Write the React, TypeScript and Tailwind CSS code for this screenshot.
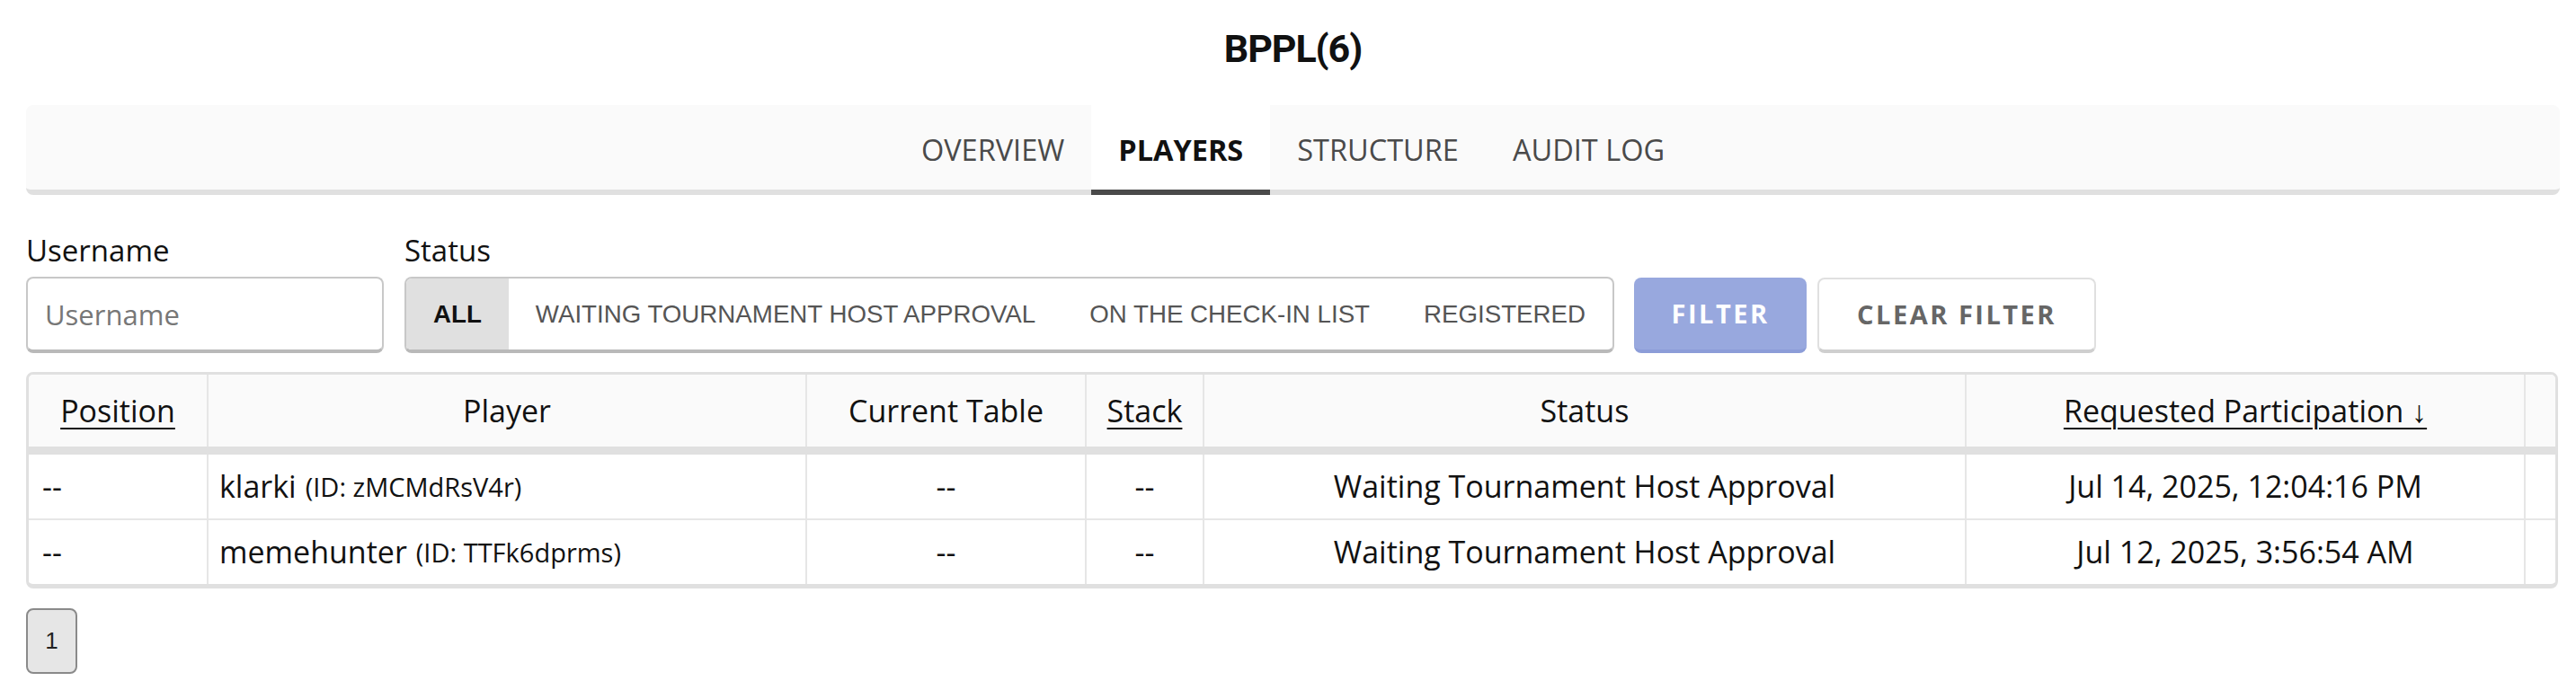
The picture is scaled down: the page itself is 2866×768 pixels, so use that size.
import React from 'react'

const body = { fontFamily: '"Open Sans", "Noto Sans", sans-serif' }
const arial = { fontFamily: '"Liberation Sans", Arial, sans-serif' }

const tabs = ['OVERVIEW', 'PLAYERS', 'STRUCTURE', 'AUDIT LOG']
const statuses = ['ALL', 'WAITING TOURNAMENT HOST APPROVAL', 'ON THE CHECK-IN LIST', 'REGISTERED']

const players = [
  { name: 'klarki', id: 'zMCMdRsV4r', date: 'Jul 14, 2025, 12:04:16 PM' },
  { name: 'memehunter', id: 'TTFk6dprms', date: 'Jul 12, 2025, 3:56:54 AM' },
]

const cols = 'grid grid-cols-[198px_666px_311px_131px_848px_622px_35px]'

function HeaderCell({ children, sort, first }: { children?: React.ReactNode; sort?: boolean; first?: boolean }) {
  return (
    <div className={`flex items-center justify-center ${first ? '' : 'border-l-2 border-[#e6e6e6]'}`}>
      <span className={sort ? 'underline decoration-2 underline-offset-[6px]' : ''}>{children}</span>
    </div>
  )
}

export default function App() {
  return (
    <div className="min-h-screen bg-white pl-[29px] pr-[18px] text-[#111]" style={body}>
      <h1
        className="pt-[30px] h-[117px] text-center text-[43px] leading-[48px] font-bold tracking-tight"
        style={{ fontFamily: 'Roboto, "Liberation Sans", sans-serif' }}
      >
        BPPL(6)
      </h1>

      <div className="h-[100px] flex justify-center bg-[#fafafa] rounded-[8px] border-b-[6px] border-[#e0e0e0]">
        {tabs.map(t => {
          const active = t === 'PLAYERS'
          return (
            <div
              key={t}
              className={`px-[30px] flex items-center pt-[6px] text-[32.5px] ${
                active ? 'bg-white font-bold text-[#111] border-b-[6px] border-[#4a4a4a] -mb-[6px]' : 'text-[#4a4a4a]'
              }`}
            >
              {t}
            </div>
          )
        })}
      </div>

      <div className="mt-[40px] flex items-end">
        <div className="flex flex-col">
          <label className="text-[33px] leading-[44px] mb-[7px]">Username</label>
          <input
            placeholder="Username"
            className="w-[398px] h-[85px] rounded-[8px] border-2 border-b-4 border-[#c8c8c8] border-b-[#b9b9b9] pl-[19px] text-[31px] placeholder:text-[#777] outline-none"
            style={body}
          />
        </div>

        <div className="flex flex-col ml-[23px]">
          <label className="text-[33px] leading-[44px] mb-[7px]">Status</label>
          <div
            className="flex h-[85px] rounded-[8px] border-2 border-b-4 border-[#c8c8c8] border-b-[#b9b9b9] overflow-hidden text-[27.7px]"
            style={arial}
          >
            {statuses.map(s => {
              const active = s === 'ALL'
              return (
                <div
                  key={s}
                  className={`px-[30px] flex items-center ${
                    active ? 'bg-[#e0e0e0] font-bold text-[#111]' : 'text-[#555]'
                  }`}
                >
                  {s}
                </div>
              )
            })}
          </div>
        </div>

        <button className="ml-[22px] w-[192px] h-[84px] rounded-[8px] bg-[#98a8de] border-b-4 border-[#8c9dd8] text-white font-bold text-[29px] tracking-[2.5px]">
          FILTER
        </button>
        <button className="ml-[12px] w-[310px] h-[84px] rounded-[8px] bg-white border-2 border-b-4 border-[#e0e0e0] border-b-[#cfcfcf] text-[#666] font-bold text-[29px] tracking-[2.5px]">
          CLEAR FILTER
        </button>
      </div>

      <div className="mt-[21px] w-[2817px] rounded-[8px] border-[3px] border-b-[5px] border-[#e0e0e0] overflow-hidden text-[34px]">
        <div className={`${cols} h-[80px] bg-[#fafafa] border-b-[9px] border-[#e0e0e0] box-content`}>
          <HeaderCell sort first>Position</HeaderCell>
          <HeaderCell>Player</HeaderCell>
          <HeaderCell>Current Table</HeaderCell>
          <HeaderCell sort>Stack</HeaderCell>
          <HeaderCell>Status</HeaderCell>
          <HeaderCell sort>Requested Participation ↓</HeaderCell>
          <HeaderCell />
        </div>
        {players.map((p, i) => (
          <div
            key={p.id}
            className={`${cols} h-[71px] box-content ${i === 0 ? 'border-b-2 border-[#e6e6e6]' : ''}`}
          >
            <div className="flex items-center pl-[15px]">--</div>
            <div className="flex items-center pl-[12px] border-l-2 border-[#e6e6e6]">
              {p.name}
              <span className="ml-[10px] text-[29px]">(ID: {p.id})</span>
            </div>
            <div className="flex items-center justify-center border-l-2 border-[#e6e6e6]">--</div>
            <div className="flex items-center justify-center border-l-2 border-[#e6e6e6]">--</div>
            <div className="flex items-center justify-center border-l-2 border-[#e6e6e6]">
              Waiting Tournament Host Approval
            </div>
            <div className="flex items-center justify-center border-l-2 border-[#e6e6e6]">{p.date}</div>
            <div className="border-l-2 border-[#e6e6e6]" />
          </div>
        ))}
      </div>

      <button
        className="mt-[22px] w-[57px] h-[73px] rounded-[8px] bg-[#e6e6e6] border-2 border-[#8a8a8a] text-[26px] text-[#222]"
        style={arial}
      >
        1
      </button>
    </div>
  )
}
